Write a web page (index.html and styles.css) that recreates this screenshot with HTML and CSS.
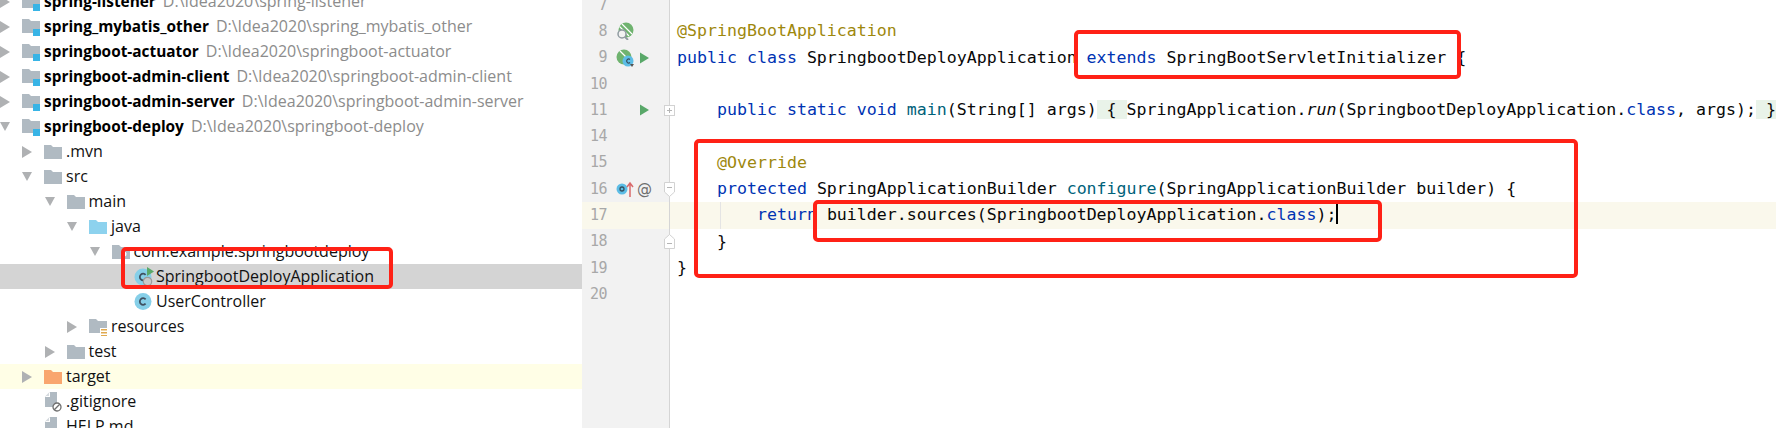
FILE: index.html
```html
<!DOCTYPE html>
<html lang="en">
<head>
<meta charset="utf-8">
<title>springboot-deploy</title>
<link rel="stylesheet" href="styles.css">
</head>
<body>
<svg class="defs" width="0" height="0" aria-hidden="true">
  <defs>
    <symbol id="arrow-r" viewBox="0 0 10 12"><path d="M0 0L10 6L0 12Z" fill="#afb1b3"/></symbol>
    <symbol id="arrow-d" viewBox="0 0 10 9"><path d="M0 0H10L5 9Z" fill="#afb1b3"/></symbol>
    <symbol id="folder" viewBox="0 0 18 14"><path d="M0 0H7L9 2H18V14H0Z" fill="#b0bac2"/></symbol>
    <symbol id="folder-blue" viewBox="0 0 18 14"><path d="M0 0H7L9 2H18V14H0Z" fill="#8dd2ee"/></symbol>
    <symbol id="folder-orange" viewBox="0 0 18 14"><path d="M0 0H7L9 2H18V14H0Z" fill="#f9a66e"/></symbol>
    <symbol id="module" viewBox="0 0 18 18"><path d="M0 1H7L9 3H18V11H11V15H0Z" fill="#b0bac2"/><rect x="11" y="11" width="7" height="7" fill="#38b4e6"/></symbol>
    <symbol id="package" viewBox="0 0 18 14"><path d="M0 0H7L9 2H18V14H0Z" fill="#b0bac2"/><circle cx="12" cy="9" r="2.5" fill="#fff"/></symbol>
    <symbol id="resources" viewBox="0 0 18 18"><path d="M0 1H7L9 3H18V10H11V15H0Z" fill="#b0bac2"/><path d="M12 11h6v1.500h-6zM12 14h6v1.500h-6zM12 17h6v1h-6z" fill="#e0a94f"/></symbol>
    <symbol id="cls" viewBox="0 0 18 18"><circle cx="9" cy="9" r="8.500" fill="#86cfe8"/><path d="M11.600 6.800A3.300 3.300 0 1 0 11.600 11.200" fill="none" stroke="#3f5060" stroke-width="1.800"/></symbol>
    <symbol id="cls-run" viewBox="0 0 20 20"><circle cx="9" cy="10" r="8.500" fill="#86cfe8"/><path d="M11.600 7.800A3.300 3.300 0 1 0 11.600 12.200" fill="none" stroke="#3f5060" stroke-width="1.800"/><path d="M13 0L20 4.500L13 9Z" fill="#59a869"/><circle cx="13.500" cy="14.500" r="4.200" fill="#c9c9c9" stroke="#9a9a9a" stroke-width="1.200"/></symbol>
    <symbol id="page" viewBox="0 0 14 18"><path d="M5 0H12V15H0V5Z" fill="#b0bac2"/><path d="M5 0V5H0Z" fill="#fff"/><path d="M4 .5L.5 4H4Z" fill="#d5dade"/></symbol>
    <symbol id="ban" viewBox="0 0 10 10"><circle cx="5" cy="5" r="4" fill="#fff" stroke="#6e6e6e" stroke-width="1.300"/><path d="M2.300 7.700L7.700 2.300" stroke="#6e6e6e" stroke-width="1.300"/></symbol>
    <symbol id="run" viewBox="0 0 10 12"><path d="M0 0L10 6L0 12Z" fill="#59a869"/></symbol>
  </defs>
</svg>

<main class="ide">
  <section class="tree">
    <div class="row"><svg class="arrow"><use href="#arrow-r"/></svg><svg class="ico ico-mod"><use href="#module"/></svg><span class="name"><b>spring-listener</b><i class="path">D:\Idea2020\spring-listener</i></span></div>
    <div class="row"><svg class="arrow"><use href="#arrow-r"/></svg><svg class="ico ico-mod"><use href="#module"/></svg><span class="name"><b>spring_mybatis_other</b><i class="path">D:\Idea2020\spring_mybatis_other</i></span></div>
    <div class="row"><svg class="arrow"><use href="#arrow-r"/></svg><svg class="ico ico-mod"><use href="#module"/></svg><span class="name"><b>springboot-actuator</b><i class="path">D:\Idea2020\springboot-actuator</i></span></div>
    <div class="row"><svg class="arrow"><use href="#arrow-r"/></svg><svg class="ico ico-mod"><use href="#module"/></svg><span class="name"><b>springboot-admin-client</b><i class="path">D:\Idea2020\springboot-admin-client</i></span></div>
    <div class="row"><svg class="arrow"><use href="#arrow-r"/></svg><svg class="ico ico-mod"><use href="#module"/></svg><span class="name"><b>springboot-admin-server</b><i class="path">D:\Idea2020\springboot-admin-server</i></span></div>
    <div class="row"><svg class="arrow down"><use href="#arrow-d"/></svg><svg class="ico ico-mod"><use href="#module"/></svg><span class="name"><b>springboot-deploy</b><i class="path">D:\Idea2020\springboot-deploy</i></span></div>
    <div class="row l1"><svg class="arrow"><use href="#arrow-r"/></svg><svg class="ico ico-dir"><use href="#folder"/></svg><span class="name">.mvn</span></div>
    <div class="row l1"><svg class="arrow down"><use href="#arrow-d"/></svg><svg class="ico ico-dir"><use href="#folder"/></svg><span class="name">src</span></div>
    <div class="row l2"><svg class="arrow down"><use href="#arrow-d"/></svg><svg class="ico ico-dir"><use href="#folder"/></svg><span class="name">main</span></div>
    <div class="row l3"><svg class="arrow down"><use href="#arrow-d"/></svg><svg class="ico ico-dir"><use href="#folder-blue"/></svg><span class="name">java</span></div>
    <div class="row l4"><svg class="arrow down"><use href="#arrow-d"/></svg><svg class="ico ico-dir"><use href="#package"/></svg><span class="name">com.example.springbootdeploy</span></div>
    <div class="row l5 selected"><span class="arrow"></span><svg class="ico ico-run"><use href="#cls-run"/></svg><span class="name">SpringbootDeployApplication</span></div>
    <div class="row l5"><span class="arrow"></span><svg class="ico ico-cls"><use href="#cls"/></svg><span class="name">UserController</span></div>
    <div class="row l3"><svg class="arrow"><use href="#arrow-r"/></svg><svg class="ico ico-mod"><use href="#resources"/></svg><span class="name">resources</span></div>
    <div class="row l2"><svg class="arrow"><use href="#arrow-r"/></svg><svg class="ico ico-dir"><use href="#folder"/></svg><span class="name">test</span></div>
    <div class="row l1 excluded"><svg class="arrow"><use href="#arrow-r"/></svg><svg class="ico ico-dir"><use href="#folder-orange"/></svg><span class="name">target</span></div>
    <div class="row l1"><span class="arrow"></span><span class="file"><svg class="ico-page"><use href="#page"/></svg><svg class="ico-ban"><use href="#ban"/></svg></span><span class="name">.gitignore</span></div>
    <div class="row l1"><span class="arrow"></span><span class="file"><svg class="ico-page"><use href="#page"/></svg></span><span class="name">HELP.md</span></div>
  </section>

  <section class="editor">
    <div class="gutter">
      <div class="gl"><span class="num">7</span></div>
      <div class="gl"><span class="num">8</span><span class="mark">
        <svg width="18" height="18" viewBox="0 0 18 18"><circle cx="10" cy="8" r="7.500" fill="#6fb36f"/><path d="M6 2L16 12M3.500 4.500L13 14" stroke="#fff" stroke-width="1.200"/><circle cx="6" cy="12" r="4" fill="#f2f2f2" stroke="#8f9aa0" stroke-width="1.500"/><path d="M9 15L12 18" stroke="#8f9aa0" stroke-width="1.800"/></svg>
      </span></div>
      <div class="gl"><span class="num">9</span><span class="mark">
        <svg width="18" height="18" viewBox="0 0 18 18"><circle cx="8" cy="8" r="7.500" fill="#6fb36f"/><path d="M4 2L14 12" stroke="#fff" stroke-width="1.200"/><circle cx="12" cy="12" r="5.500" fill="#5dbde6"/><path d="M14 10.500A2 2 0 1 0 14 13.500" fill="none" stroke="#35505f" stroke-width="1.200"/><path d="M14 15H18L16 18Z" fill="#555"/></svg>
      </span><span class="act"><svg class="run"><use href="#run"/></svg></span></div>
      <div class="gl"><span class="num">10</span></div>
      <div class="gl"><span class="num">11</span><span class="mark"></span><span class="act"><svg class="run"><use href="#run"/></svg></span><span class="fold">
        <svg width="11" height="11" viewBox="0 0 11 11"><rect x=".5" y=".5" width="10" height="10" fill="#fff" stroke="#d2d2d2"/><path d="M3 5.500H8M5.500 3V8" stroke="#b5b5b5"/></svg>
      </span></div>
      <div class="gl"><span class="num">14</span></div>
      <div class="gl"><span class="num">15</span></div>
      <div class="gl"><span class="num">16</span><span class="mark">
        <svg width="18" height="18" viewBox="0 0 18 18"><circle cx="6" cy="9" r="5.500" fill="#5dbde6"/><circle cx="6" cy="9" r="2" fill="none" stroke="#35505f" stroke-width="1.300"/><path d="M14 17V4M11 7L14 3L17 7" fill="none" stroke="#d9696b" stroke-width="1.500"/></svg>
      </span><span class="act at">@</span><span class="fold">
        <svg width="11" height="15" viewBox="0 0 11 15"><path d="M.5 .5H10.500V10L5.500 14.500L.5 10Z" fill="#fff" stroke="#d2d2d2"/><path d="M3 5.500H8" stroke="#b5b5b5"/></svg>
      </span></div>
      <div class="gl caret-line"><span class="num">17</span></div>
      <div class="gl"><span class="num">18</span><span class="mark"></span><span class="act"></span><span class="fold">
        <svg width="11" height="15" viewBox="0 0 11 15"><path d="M.5 14.500H10.500V5L5.500 .5L.5 5Z" fill="#fff" stroke="#d2d2d2"/><path d="M3 9.500H8" stroke="#b5b5b5"/></svg>
      </span></div>
      <div class="gl"><span class="num">19</span></div>
      <div class="gl"><span class="num">20</span></div>
    </div>
    <div class="code">
      <div class="cl"></div>
      <div class="cl"><span class="an">@SpringBootApplication</span></div>
      <div class="cl"><span class="kw">public class</span> SpringbootDeployApplication <span class="kw">extends</span> SpringBootServletInitializer {</div>
      <div class="cl"></div>
      <div class="cl">    <span class="kw">public static void</span> <span class="fn">main</span>(String[] args)<span class="folded"> { </span>SpringApplication.<em>run</em>(SpringbootDeployApplication.<span class="kw">class</span>, args);<span class="folded"> } </span></div>
      <div class="cl"></div>
      <div class="cl">    <span class="an">@Override</span></div>
      <div class="cl">    <span class="kw">protected</span> SpringApplicationBuilder <span class="fn">configure</span>(SpringApplicationBuilder builder) {</div>
      <div class="cl caret-line guide">        <span class="kw">return</span> builder.sources(SpringbootDeployApplication.<span class="kw">class</span>);<span class="caret"></span></div>
      <div class="cl">    }</div>
      <div class="cl">}</div>
      <div class="cl"></div>
    </div>
  </section>
</main>

<div class="callout c-extends"></div>
<div class="callout c-method"></div>
<div class="callout c-return"></div>
<div class="callout c-tree"></div>
</body>
</html>
```

FILE: styles.css
```css
* { box-sizing: border-box; }
html, body { margin: 0; height: 100%; }
body { position: relative; width: 1776px; height: 428px; overflow: hidden; background: #fff; }
.defs { position: absolute; }
.ide { display: flex; height: 428px; overflow: hidden; }

/* project tree */
.tree { flex: 0 0 582px; margin-top: -11px; font: 16px/25px "Open Sans", "Noto Sans", sans-serif; color: #111; }
.row { display: flex; align-items: center; height: 25px; white-space: nowrap; padding-left: var(--pad, 0); }
.l1 { --pad: 22px; }
.l2 { --pad: 44.500px; }
.l3 { --pad: 67px; }
.l4 { --pad: 89.500px; }
.l5 { --pad: 112px; }
.arrow { flex: 0 0 10px; width: 10px; height: 12px; display: block; margin-right: 12px; }
.arrow.down { height: 9px; }
.ico { flex: 0 0 18px; width: 18px; }
.ico-mod { height: 18px; }
.ico-dir { height: 14px; }
.ico-cls { height: 19px; }
.ico-run { flex-basis: 20px; width: 20px; height: 20px; margin-right: -2px; }
.name { margin-left: 4px; }
.name b { font-weight: 700; font-size: 15.400px; color: #000; }
.path { font-style: normal; color: #8c8c8c; margin-left: 7px; }
.selected { background: #d4d4d4; }
.excluded { background: #fffee6; }
.file { flex: 0 0 18px; width: 18px; height: 20px; position: relative; }
.ico-page { width: 14px; height: 18px; display: block; margin-left: 1px; }
.ico-ban { width: 10px; height: 10px; position: absolute; right: 0; bottom: 0; }

/* editor */
.editor { flex: 1; display: flex; min-width: 0; overflow: hidden; }
.gutter { flex: 0 0 88px; background: #f2f2f2; border-right: 1px solid #d5d5d5; }
.gl, .cl { height: 26.300px; position: relative; top: -8px; }
.gl { display: flex; align-items: center; }
.num { flex: 0 0 25px; text-align: right; font: 15px/1 "DejaVu Sans Mono", monospace; color: #a8a8a8; letter-spacing: -0.500px; }
.mark { flex: 0 0 27px; width: 27px; padding-left: 9px; height: 18px; display: block; }
.mark:empty { height: 0; }
.act { flex: 0 0 14px; display: flex; justify-content: center; margin-left: 3px; }
.run { width: 9px; height: 12px; display: block; }
.at { font: 15px/1 "DejaVu Sans", sans-serif; color: #6e6e6e; }
.fold { flex: 1; display: flex; justify-content: flex-end; margin-right: -6px; position: relative; z-index: 1; }
.fold svg { display: block; }
.caret-line { background: #faf8ec; }
.code { flex: 1; min-width: 0; padding-left: 7px; font: 16.600px/26.300px "DejaVu Sans Mono", monospace; color: #080808; }
.cl { white-space: pre; }
.kw { color: #0033b3; }
.an { color: #9e880d; }
.fn { color: #00627a; }
.folded { background: #e9f3e9; }
.cl.caret-line { margin-left: -7px; padding-left: 7px; }
.guide { background: linear-gradient(#e4e4e4, #e4e4e4) 50px 0 / 1px 100% no-repeat, #faf8ec; }
.caret { display: inline-block; width: 2px; height: 20px; background: #000; vertical-align: -4px; }

/* hand-drawn red annotation boxes over the screenshot */
.callout { position: absolute; border: 4px solid #ff2116; border-radius: 5px; }
.c-extends { left: 1074px; top: 30px; width: 387px; height: 49px; }
.c-method { left: 694px; top: 139px; width: 884px; height: 139px; }
.c-return { left: 813px; top: 200px; width: 569px; height: 42px; }
.c-tree { left: 121px; top: 247px; width: 272px; height: 42px; }
```
